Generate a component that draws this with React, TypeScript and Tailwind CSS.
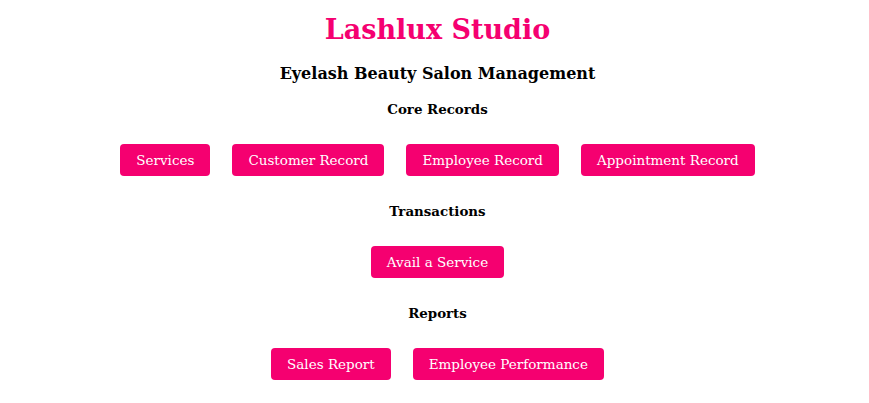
import React from "react";

const sections = [
  { title: "Core Records", items: ["Services", "Customer Record", "Employee Record", "Appointment Record"] },
  { title: "Transactions", items: ["Avail a Service"] },
  { title: "Reports", items: ["Sales Report", "Employee Performance"] },
];

export default function App() {
  return (
    <div className="min-h-screen bg-white pl-[6px] text-center text-black font-['DejaVu_Serif',serif]">
      <h1 className="pt-[14px] text-[27px] leading-[32px] font-bold text-[#f50070]">Lashlux Studio</h1>
      <h2 className="mt-[18px] text-[16px] leading-[20px] font-bold">Eyelash Beauty Salon Management</h2>

      {sections.map((s, i) => (
        <div key={s.title} className={i === 0 ? "mt-[16px]" : "mt-[26px]"}>
          <h3 className="text-[13.4px] leading-[18px] font-bold">{s.title}</h3>
          <div className="mt-[26px] flex justify-center gap-[22px]">
            {s.items.map((label) => (
              <button
                key={label}
                className="h-[32px] rounded-[4px] bg-[#f50070] px-4 text-[13.5px] text-white"
              >
                {label}
              </button>
            ))}
          </div>
        </div>
      ))}
    </div>
  );
}
